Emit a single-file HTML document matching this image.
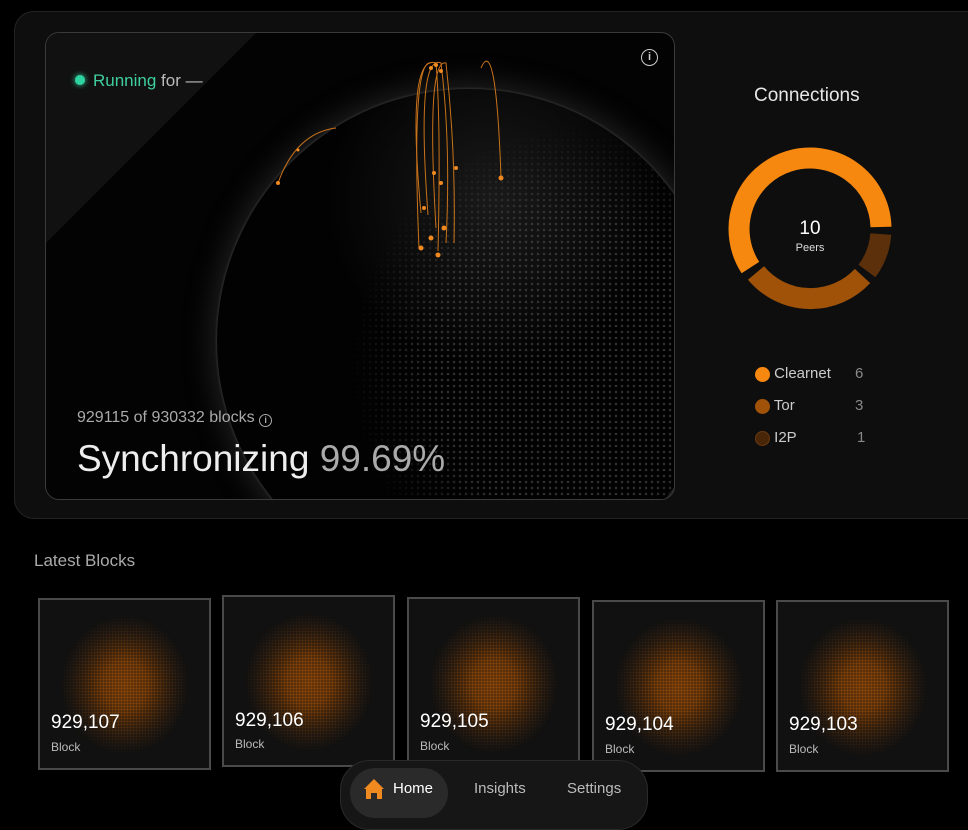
<!DOCTYPE html>
<html><head><meta charset="utf-8"><style>
*{margin:0;padding:0;box-sizing:border-box}
body{width:968px;height:812px;background:#000;overflow:hidden;font-family:"Liberation Sans",sans-serif;position:relative;color:#ddd}
.outer{position:absolute;left:14px;top:11px;width:980px;height:508px;border-radius:20px;background:#0e0e0e;border:1px solid #232323}
.inner{position:absolute;left:45px;top:32px;width:630px;height:468px;border-radius:14px;background:#030303;border:1px solid #3a3a3a;overflow:hidden}
.sheen{position:absolute;left:0;top:0;width:630px;height:468px;background:#111;clip-path:polygon(0 0,210px 0,0 210px)}
.globe{position:absolute;left:171px;top:56px;width:504px;height:504px;border-radius:50%;background:#020202;overflow:hidden;box-shadow:0 0 28px 6px rgba(85,85,85,.35),0 0 2px 1px rgba(120,120,120,.3)}
.dots{position:absolute;inset:0;background:radial-gradient(circle,#2e2e2e 0 1.1px,transparent 1.5px) 0 0/6px 6px;-webkit-mask-image:radial-gradient(ellipse 55% 60% at 70% 55%,#000 50%,transparent 80%);mask-image:radial-gradient(ellipse 55% 60% at 70% 55%,#000 50%,transparent 80%)}
.glow{position:absolute;inset:0;background:radial-gradient(circle at 55% 22%,rgba(80,80,80,.3),rgba(0,0,0,0) 35%)}
.t{position:absolute;white-space:nowrap}
.info{position:absolute;width:17px;height:17px;border:1.5px solid #ccc;border-radius:50%;font-size:11px;line-height:14px;text-align:center;color:#ccc;font-weight:bold}
.card{position:absolute;width:173px;height:172px;border:2px solid #4a4a4a;background:#111;overflow:hidden}
.card::before{content:"";position:absolute;left:20px;top:15px;width:130px;height:140px;background:radial-gradient(circle,rgba(200,100,15,.45) 0 1px,transparent 1.5px) 0 0/3px 3px,radial-gradient(ellipse 50% 50% at 50% 50%,#5a2f08 0%,#3a2008 50%,rgba(17,17,17,0) 100%);-webkit-mask-image:radial-gradient(ellipse 50% 50% at 50% 50%,#000 35%,transparent 100%);mask-image:radial-gradient(ellipse 50% 50% at 50% 50%,#000 35%,transparent 100%)}
.card .n{position:absolute;left:11px;top:112px;font-size:19px;color:#fff}
.card .b{position:absolute;left:11px;top:140px;font-size:12px;color:#bbb}
.dot{display:inline-block;width:15px;height:15px;border-radius:50%;vertical-align:middle}
</style></head><body>
<div class="outer"></div>
<div class="inner">
 <div class="sheen"></div>
 <div class="globe"><div class="dots"></div><div class="glow"></div></div>
 <svg style="position:absolute;left:0;top:0" width="630" height="468" fill="none" stroke="#c9721a" stroke-width="1">
  <path d="M232 150 Q250 100 290 95"/>
  <path d="M375 180 Q360 20 390 30 Q395 90 392 218"/>
  <path d="M382 182 Q370 20 395 30 Q405 110 400 210"/>
  <path d="M390 195 Q380 25 400 30 Q410 120 408 210"/>
  <path d="M373 215 Q365 25 385 30"/>
  <path d="M455 145 Q450 0 435 35"/>
  <g fill="#f08a20" stroke="none">
   <circle cx="232" cy="150" r="2"/><circle cx="252" cy="117" r="1.5"/>
   <circle cx="375" cy="215" r="2.5"/><circle cx="392" cy="222" r="2.5"/><circle cx="385" cy="205" r="2.5"/><circle cx="398" cy="195" r="2.5"/><circle cx="395" cy="150" r="2"/><circle cx="388" cy="140" r="2"/><circle cx="378" cy="175" r="2"/><circle cx="410" cy="135" r="2"/>
   <circle cx="455" cy="145" r="2.5"/><circle cx="390" cy="32" r="2"/><circle cx="395" cy="38" r="2"/><circle cx="385" cy="35" r="2"/>
  </g>
 </svg>
 <div class="t" style="left:29px;top:38px"><span class="dot" style="width:10px;height:10px;background:#2fd3a0;box-shadow:0 0 6px #2fd3a0;margin-right:8px;vertical-align:1px"></span><span style="color:#3fcf9f;font-size:17px">Running</span><span style="color:#bbb;font-size:17px"> for —</span></div>
 <div class="info" style="left:595px;top:16px">i</div>
 <div class="t" style="left:31px;top:376px;font-size:16px;color:#aaa">929115 of 930332 blocks <span class="info" style="position:relative;display:inline-block;width:13px;height:13px;font-size:9px;line-height:10px;border-width:1px;color:#aaa;border-color:#aaa;vertical-align:-1px">i</span></div>
 <div class="t" style="left:31px;top:405px;font-size:37px;color:#eee">Synchronizing <span style="color:#aaa">99.69%</span></div>
</div>
<div class="t" style="left:754px;top:85px;font-size:19px;color:#e6e6e6">Connections</div>
<svg style="position:absolute;left:725px;top:143px" width="170" height="170" viewBox="0 0 170 170">
 <g fill="none" stroke-width="21">
  <path d="M25.4 124.6 A71 71 0 1 1 156 84" stroke="#f7880f"/>
  <path d="M155.8 91 A71 71 0 0 1 142 128" stroke="#5c300b"/>
  <path d="M137.5 133 A71 71 0 0 1 31 130" stroke="#9f5208"/>
 </g>
 <text x="85" y="91" fill="#fff" font-size="19" text-anchor="middle" font-family="Liberation Sans">10</text>
 <text x="85" y="108" fill="#ddd" font-size="11" text-anchor="middle" font-family="Liberation Sans">Peers</text>
</svg>
<div class="t" style="left:755px;top:365px;font-size:15px;color:#ccc"><span class="dot" style="background:#f7880f"></span> Clearnet<span style="position:absolute;left:100px;color:#888">6</span></div>
<div class="t" style="left:755px;top:397px;font-size:15px;color:#ccc"><span class="dot" style="background:#9f5208"></span> Tor<span style="position:absolute;left:100px;color:#888">3</span></div>
<div class="t" style="left:755px;top:429px;font-size:15px;color:#ccc"><span class="dot" style="background:#4a2608;border:1px solid #6a3a10"></span> I2P<span style="position:absolute;left:102px;color:#888">1</span></div>
<div class="t" style="left:34px;top:551px;font-size:17px;color:#aaa">Latest Blocks</div>
<div class="card" style="left:38px;top:598px"><div class="n">929,107</div><div class="b">Block</div></div>
<div class="card" style="left:222px;top:595px"><div class="n" style="top:113px">929,106</div><div class="b" style="top:140px">Block</div></div>
<div class="card" style="left:407px;top:597px"><div class="n">929,105</div><div class="b">Block</div></div>
<div class="card" style="left:592px;top:600px"><div class="n">929,104</div><div class="b">Block</div></div>
<div class="card" style="left:776px;top:600px"><div class="n">929,103</div><div class="b">Block</div></div>
<div style="position:absolute;left:340px;top:760px;width:308px;height:70px;border-radius:30px;background:#161616;border:1px solid #2a2a2a"></div>
<div style="position:absolute;left:350px;top:768px;width:98px;height:50px;border-radius:25px;background:#2a2a2a"></div>
<svg style="position:absolute;left:363px;top:778px" width="22" height="22" viewBox="0 0 22 22"><path d="M11 1 L21 11 L19 11 L19 21 L14 21 L14 15 L8 15 L8 21 L3 21 L3 11 L1 11 Z" fill="#f08a20"/></svg>
<div class="t" style="left:393px;top:780px;font-size:15px;color:#fff">Home</div>
<div class="t" style="left:474px;top:780px;font-size:15px;color:#bbb">Insights</div>
<div class="t" style="left:567px;top:780px;font-size:15px;color:#bbb">Settings</div>
</body></html>
